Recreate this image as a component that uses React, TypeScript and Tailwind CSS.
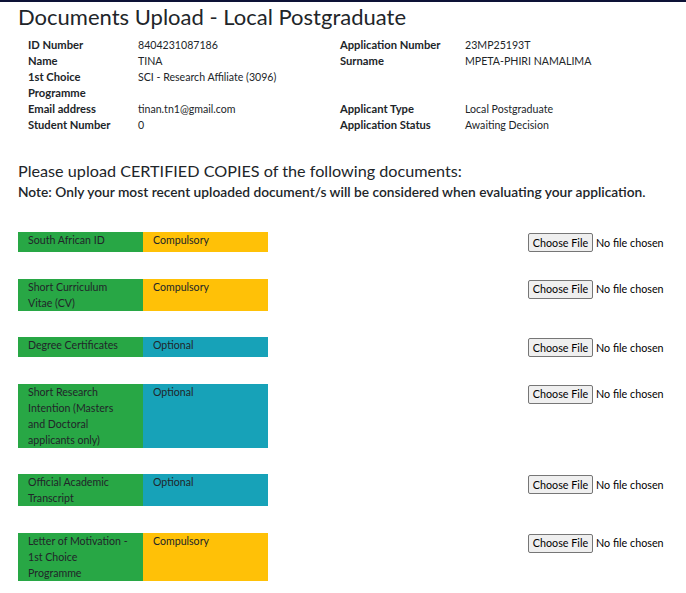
import React from "react";

type Doc = {
  name: string;
  required: boolean;
};

const docs: Doc[] = [
  { name: "South African ID", required: true },
  { name: "Short Curriculum Vitae (CV)", required: true },
  { name: "Degree Certificates", required: false },
  { name: "Short Research Intention (Masters and Doctoral applicants only)", required: false },
  { name: "Official Academic Transcript", required: false },
  { name: "Letter of Motivation - 1st Choice Programme", required: true },
];

const details: [string, string][][] = [
  [["ID Number", "8404231087186"], ["Application Number", "23MP25193T"]],
  [["Name", "TINA"], ["Surname", "MPETA-PHIRI NAMALIMA"]],
  [["1st Choice Programme", "SCI - Research Affiliate (3096)"], ["", ""]],
  [["Email address", "tinan.tn1@gmail.com"], ["Applicant Type", "Local Postgraduate"]],
  [["Student Number", "0"], ["Application Status", "Awaiting Decision"]],
];

const FilePicker = () => (
  <div className="flex items-center text-[10.75px] leading-4 whitespace-nowrap">
    <span className="h-[19px] w-[65px] border border-[#767676] bg-[#efefef] rounded-[2px] flex items-center justify-center text-black">
      Choose File
    </span>
    <span className="ml-[3px] text-black">No file chosen</span>
  </div>
);

export default function App() {
  return (
    <div
      className="min-h-[593px] bg-white border-t-2 border-[#0d1236] text-[#212529]"
      style={{ fontFamily: '"Segoe UI", Lato, sans-serif' }}
    >
      <div className="pl-[18px]">
        <h1 className="text-[22px] leading-7 pt-[1px]">Documents Upload - Local Postgraduate</h1>

        <div className="mt-[6px] pl-[10px] leading-4">
          {details.map((row, i) => (
            <div key={i} className="flex">
              {row.map(([label, value], j) => (
                <div key={j} className={j === 0 ? "flex w-[312px]" : "flex"}>
                  <div className={j === 0 ? "w-[110px] font-bold text-[11.2px]" : "w-[125px] font-bold text-[11.2px]"}>
                    {label}
                  </div>
                  <div className={j === 0 ? "w-[200px] text-[10.6px]" : "text-[10.6px]"}>{value}</div>
                </div>
              ))}
            </div>
          ))}
        </div>

        <h2 className="mt-[26px] text-[16.2px] leading-6">Please upload CERTIFIED COPIES of the following documents:</h2>
        <p className="text-[13.75px] leading-[18px] font-semibold">
          Note: Only your most recent uploaded document/s will be considered when evaluating your application.
        </p>

        <div className="mt-[31px] flex flex-col gap-[26.5px] pb-3">
          {docs.map((d) => (
            <div key={d.name} className="flex items-start">
              <div className="flex min-h-[20px] text-[10.6px] leading-4">
                <div className="w-[125px] bg-[#28a745] pl-[10px] pr-[12px]">{d.name}</div>
                <div
                  className={
                    d.required
                      ? "w-[125px] bg-[#ffc107] pl-[10px]"
                      : "w-[125px] bg-[#17a2b8] pl-[10px]"
                  }
                >
                  {d.required ? "Compulsory" : "Optional"}
                </div>
              </div>
              <div className="ml-[260px] pt-[1px]">
                <FilePicker />
              </div>
            </div>
          ))}
        </div>
      </div>
    </div>
  );
}
